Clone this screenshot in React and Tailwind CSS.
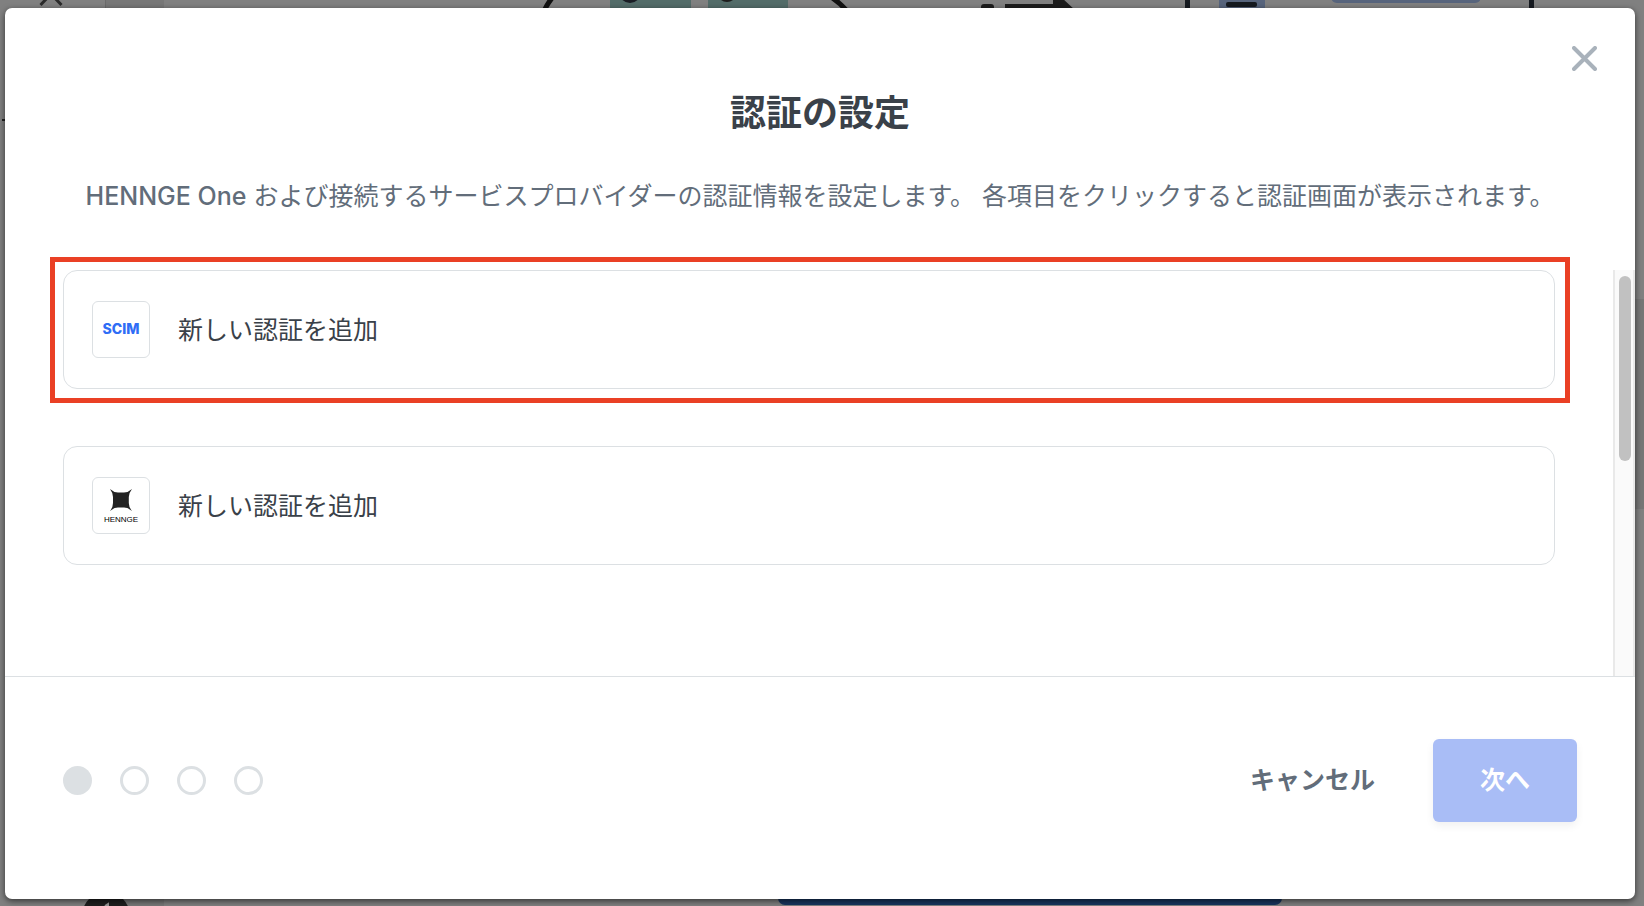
import React from "react";

function PageBehind() {
  return (
    <svg
      aria-hidden="true"
      className="absolute inset-0 h-full w-full"
      viewBox="0 0 1644 906"
      preserveAspectRatio="none"
    >
      <rect width="1644" height="906" fill="#808080" />
      <rect x="105" y="0" width="59" height="906" fill="#777777" />
      <rect x="105" y="0" width="1" height="906" fill="#6b6b6b" />
      <path d="M40.5 5 L51 -6 L61.5 5" fill="none" stroke="#2b2b2b" strokeWidth="3" />
      <rect x="2" y="119" width="4" height="2" fill="#222" />
      <path d="M545 9 Q548 3 552 -2" fill="none" stroke="#111" strokeWidth="5" />
      <path d="M831 -3 Q839 2 847 11" fill="none" stroke="#111" strokeWidth="5" />
      <rect x="610" y="0" width="81" height="10" fill="#536c69" />
      <rect x="708" y="0" width="80" height="10" fill="#536c69" />
      <circle cx="630" cy="-8" r="11" fill="#1a1d24" />
      <circle cx="727" cy="-8" r="10" fill="#1c1c1c" />
      <rect x="981" y="4" width="13" height="8" rx="3" fill="#1c1c1c" />
      <path d="M1005 4 H1053 V-2 H1062 L1075 10 H1005 Z" fill="#1c1c1c" />
      <rect x="1185" y="0" width="5" height="10" fill="#161a20" />
      <rect x="1219" y="0" width="46" height="10" fill="#57647c" />
      <rect x="1226" y="2" width="31" height="5" rx="2" fill="#161a20" />
      <rect x="1331" y="-20" width="150" height="23" rx="6" fill="#57647c" />
      <rect x="1529" y="0" width="5" height="10" fill="#161a20" />
      <rect x="1630" y="299" width="14" height="210" fill="#767676" />
      <circle cx="106" cy="916" r="24" fill="#1f1f1f" />
      <path d="M105 906 L108 904 V906" fill="none" stroke="#999" strokeWidth="2" />
      <rect x="778" y="860" width="504" height="45" rx="7" fill="#193660" />
    </svg>
  );
}

function HenngeLogo() {
  return (
    <span className="flex flex-col items-center pt-[2px]">
      <svg viewBox="0 0 22 22" className="h-[22px] w-[22px]" aria-hidden="true">
        <path
          d="M0 0 Q4 3.6 8 3.6 H14 Q18 3.6 22 0 Q18.8 4 18.8 8 V14 Q18.8 18 22 22 Q18 18.6 14 18.6 H8 Q4 18.6 0 22 Q3 18 3 14 V8 Q3 4 0 0 Z"
          fill="#222"
        />
      </svg>
      <span className="mt-1 font-['Liberation_Sans',sans-serif] text-[8px] leading-[10px] text-black">
        HENNGE
      </span>
    </span>
  );
}

function ScimLogo() {
  return (
    <span className="pb-[2px] text-[14px] leading-4 font-extrabold text-[#2f6df6]">SCIM</span>
  );
}

function AuthCard({ logo, highlighted }) {
  return (
    <li className="relative">
      <button
        type="button"
        className="flex w-full items-center gap-7 rounded-[14px] border border-[#dce0e3] bg-white px-7 py-[30px] text-left"
      >
        <span className="flex h-[57px] w-[58px] shrink-0 items-center justify-center rounded-md border border-[#dce0e3]">
          {logo}
        </span>
        <span className="text-[25px] leading-10 text-[#3a4149]">新しい認証を追加</span>
      </button>
      {highlighted && (
        <span
          aria-hidden="true"
          className="pointer-events-none absolute -top-[13px] -right-[15px] -bottom-[14px] -left-[13px] border-5 border-[#ea4025]"
        />
      )}
    </li>
  );
}

function Steps({ count, current }) {
  return (
    <ol className="flex gap-7">
      {Array.from({ length: count }, (_, i) => (
        <li
          key={i}
          className={
            i === current
              ? "h-[29px] w-[29px] rounded-full bg-[#dce0e3]"
              : "h-[29px] w-[29px] rounded-full border-3 border-[#dce0e3]"
          }
        />
      ))}
    </ol>
  );
}

export default function App() {
  return (
    <div
      lang="ja"
      className="relative flex min-h-screen flex-col pt-2 pr-[9px] pb-[7px] pl-[5px] font-['Inter','Noto_Sans_CJK_JP',sans-serif]"
    >
      <PageBehind />
      <section
        role="dialog"
        aria-labelledby="dialog-title"
        className="relative flex flex-1 flex-col rounded-[7px] bg-white shadow-[0_2px_6px_rgba(0,0,0,0.6)]"
      >
        <button type="button" aria-label="閉じる" className="absolute top-[38px] right-[38px]">
          <svg viewBox="0 0 25 25" className="h-[25px] w-[25px]" aria-hidden="true">
            <path
              d="M2 2 L23 23 M23 2 L2 23"
              stroke="#a9b2bb"
              strokeWidth="4"
              strokeLinecap="round"
            />
          </svg>
        </button>
        <header className="px-14 pt-[77px] pb-[54px] text-center">
          <h1 id="dialog-title" className="text-[36px] leading-[56px] font-bold text-[#3a4149]">
            認証の設定
          </h1>
          <p className="mt-[35px] text-[25px] leading-10 text-[#626d7a]">
            <span className="font-medium">HENNGE One</span>{" "}
            および接続するサービスプロバイダーの認証情報を設定します。 各項目をクリックすると認証画面が表示されます。
          </p>
        </header>
        <div className="flex flex-1 border-b border-[#dce0e3]">
          <ul className="flex flex-1 flex-col gap-[57px] pr-[58px] pb-14 pl-[58px]">
            <AuthCard logo={<ScimLogo />} highlighted />
            <AuthCard logo={<HenngeLogo />} />
          </ul>
          <div
            aria-hidden="true"
            className="w-[22px] border-x-2 border-[#e9e9e9] bg-[#fafafa] pt-[6px] pr-[2px] pl-1"
          >
            <div className="h-[185px] rounded-full bg-[#c1c1c1]" />
          </div>
        </div>
        <footer className="flex items-center justify-between px-[58px] pt-[62px] pb-[77px]">
          <Steps count={4} current={0} />
          <div className="flex items-center gap-[58px]">
            <button type="button" className="pb-[2px] text-[25px] leading-10 font-bold text-[#626d7a]">
              キャンセル
            </button>
            <button
              type="button"
              className="h-[83px] w-36 rounded-md bg-[#a9bdf6] pb-[2px] text-[25px] leading-10 font-bold text-white shadow-[0_4px_8px_rgba(0,0,0,0.06)]"
            >
              次へ
            </button>
          </div>
        </footer>
      </section>
    </div>
  );
}
